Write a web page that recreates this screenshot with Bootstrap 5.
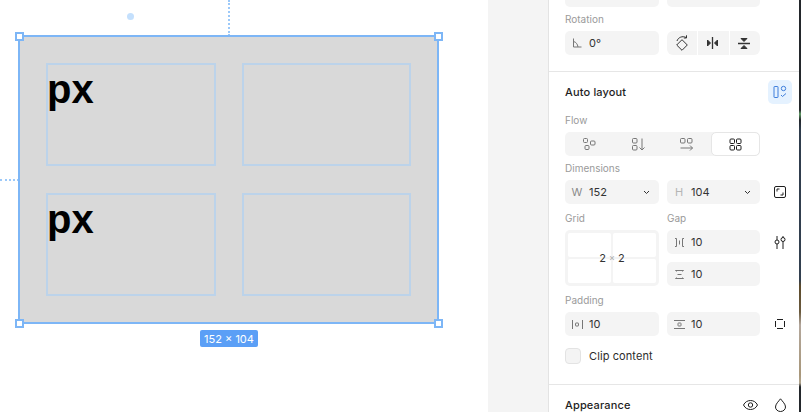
<!DOCTYPE html>
<html lang="en">
<head>
  <meta charset="UTF-8">
  <title>Auto layout</title>
  <link href="https://cdn.jsdelivr.net/npm/bootstrap@5.3.3/dist/css/bootstrap.min.css" rel="stylesheet">
  <style>
    html, body { height: 412px; overflow: hidden; background: #fff; }
    body { font-family: Inter, "Liberation Sans", sans-serif; font-size: 11px; color: #2c2c2c; }
    svg { display: block; flex: none; fill: none; stroke: currentColor; stroke-width: 1; }

    /* canvas */
    .board { position: relative; width: 488px; height: 412px; background: #fff; flex: none; }
    .guide-v { position: absolute; left: 228px; top: 0; height: 36px; border-left: 2px dotted #9cc9f9; }
    .guide-h { position: absolute; left: 0; top: 179px; width: 19px; border-top: 2px dotted #9cc9f9; }
    .pivot { position: absolute; left: 127px; top: 13px; width: 7px; height: 7px; border-radius: 50%; background: #c4e0fd; }
    .frame-box { position: absolute; left: 18px; top: 35px; width: 421px; height: 289px; background: #d9d9d9; border: 2px solid #7db6f6;
      display: grid; grid-template-columns: 170px 169px; grid-template-rows: 103px 103px; column-gap: 26px; row-gap: 27px; padding: 26px 26px 0 26px; }
    .cell-box { border: 2px solid #bcd3ea; }
    .px-text { font-family: "Liberation Sans", sans-serif; font-weight: 700; font-size: 40px; line-height: 46px; color: #000; margin: 1px 0 0 -1px; }
    .grip { position: absolute; width: 9px; height: 9px; background: #fff; border: 2px solid #7db6f6; }
    .size-tag { position: absolute; left: 200px; top: 330px; width: 58px; height: 17px; border-radius: 2px; background: #5b9ff6; color: #fff; font-size: 11px; line-height: 18px; text-align: center; }

    /* side strip + panel */
    .strip { width: 61px; height: 412px; background: #f4f4f4; border-right: 1px solid #e3e3e3; flex: none; }
    .panel { width: 250px; height: 412px; background: #fff; overflow: hidden; flex: none; }
    .edge { width: 2px; height: 412px; flex: none; background: linear-gradient(#23272b 0, #23272b 110px, #5f9a63 114px, #23272b 120px, #2f3c4c 130px, #33404f 280px, #5c4a2c 286px, #6a5a3e 312px, #b3a79c 325px, #a8977a 375px, #b0a58f 383px, #23272b 387px, #23272b 412px); }
    .sect { padding: 0 0 0 16px; border-bottom: 1px solid #e6e6e6; }
    .stub { height: 7px; overflow: hidden; }
    .stub > div { margin-top: -17px; }
    .lbl { height: 24px; line-height: 25px; font-size: 10px; color: #9a9a9a; }
    .fld { height: 24px; border-radius: 5px; background: #f4f4f4; display: flex; align-items: center; color: #333; }
    .w-a { width: 94px; }
    .w-b { width: 93px; }
    .side-ico { width: 24px; height: 24px; display: flex; align-items: center; justify-content: center; color: #1e1e1e; }
    .gap-8 { gap: 8px; }
    .ico-l { width: 24px; display: flex; justify-content: center; color: #777; flex: none; }
    .hd { font-size: 11px; font-weight: 500; color: #1e1e1e; letter-spacing: .15px; }
    .flip-btn { flex: 1; height: 24px; background: #f4f4f4; display: flex; align-items: center; justify-content: center; color: #333; padding-right: 1px; }
    .al-btn { width: 24px; height: 24px; border-radius: 5px; background: #e5f2ff; color: #3f7fdc; display: flex; align-items: center; justify-content: center; }
    .seg { width: 195px; height: 24px; border-radius: 5px; background: #f4f4f4; display: flex; }
    .seg-it { width: 25%; flex: none; display: flex; align-items: center; justify-content: center; color: #777; }
    .seg-on { background: #fff; border: 1px solid #e6e6e6; border-radius: 5px; color: #1e1e1e; }
    .dim-k { width: 24px; text-align: center; color: #8a8a8a; flex: none; }
    .chev { margin-left: auto; margin-right: 9px; color: #333; }
    .grid-pick { position: relative; width: 94px; height: 56px; border-radius: 5px; background: #f4f4f4; padding: 3px; display: grid; grid-template-columns: 1fr 1fr; grid-template-rows: 1fr 1fr; gap: 2px; }
    .grid-pick > span { background: #fff; border-radius: 2px; }
    .grid-val { position: absolute; inset: 0; display: flex; align-items: center; justify-content: center; gap: 3px; color: #333; }
    .grid-val i { font-style: normal; color: #aaa; font-size: 9px; }
    .clip-row { margin-top: 12px; gap: 8px; line-height: 16px; letter-spacing: .1px; }
    .tick { width: 16px; height: 16px; border: 1px solid #e3e3e3; border-radius: 4px; background: #f4f4f4; }
  </style>
</head>
<body>
<div class="d-flex">

  <!-- canvas -->
  <div class="board">
    <div class="guide-v"></div>
    <div class="guide-h"></div>
    <div class="pivot"></div>
    <div class="frame-box">
      <div class="cell-box"><div class="px-text">px</div></div>
      <div class="cell-box"></div>
      <div class="cell-box"><div class="px-text">px</div></div>
      <div class="cell-box"></div>
    </div>
    <div class="grip" style="left:15px;top:32px"></div>
    <div class="grip" style="left:434px;top:32px"></div>
    <div class="grip" style="left:15px;top:319px"></div>
    <div class="grip" style="left:434px;top:319px"></div>
    <div class="size-tag">152 × 104</div>
  </div>

  <div class="strip"></div>

  <!-- inspector -->
  <div class="panel">
    <div class="sect pb-3">
      <div class="stub"><div class="d-flex gap-8">
        <div class="fld w-a"></div><div class="fld w-b"></div>
      </div></div>
      <div class="lbl">Rotation</div>
      <div class="d-flex gap-8">
        <div class="fld w-a">
          <div class="ico-l"><svg width="10" height="10" viewBox="0 0 10 10"><path d="M1.5 .5v8.5h8M1.5 3.500c2.500 .5 4 2.500 4.500 5.500"/></svg></div>
          <span>0°</span>
        </div>
        <div class="d-flex w-b rounded-2 overflow-hidden" style="gap:1px">
          <div class="flip-btn"><svg width="12" height="16" viewBox="0 0 12 16" stroke-width="1.300"><path d="M6 4.700 11.300 10 6 15.300 .7 10ZM1 6C2 2.500 6.500 .5 10 2.500M10.500 .3v2.700H7.800"/></svg></div>
          <div class="flip-btn"><svg width="13" height="12" viewBox="0 0 13 12"><path d="M6.500 0v12" stroke-width="1.300"/><path d="M1.500 3 4.500 6 1.500 9ZM11.500 3 8.500 6 11.500 9Z" fill="currentColor"/></svg></div>
          <div class="flip-btn"><svg width="12" height="13" viewBox="0 0 12 13"><path d="M0 6.500h12" stroke-width="1.300"/><path d="M3 1.500 6 4.500 9 1.500ZM3 11.500 6 8.500 9 11.500Z" fill="currentColor"/></svg></div>
        </div>
      </div>
    </div>

    <div class="sect" style="padding-top:8px;padding-bottom:20px">
      <div class="d-flex align-items-center justify-content-between" style="padding-right:7px;margin-bottom:4px">
        <span class="hd">Auto layout</span>
        <div class="al-btn"><svg width="14" height="14" viewBox="0 0 14 14"><rect x="1" y="1.500" width="4" height="11" rx=".5"/><circle cx="10.500" cy="3.500" r="2.200"/><path d="M8 10l1.500 1.500L13 8.500"/></svg></div>
      </div>
      <div class="lbl">Flow</div>
      <div class="seg">
        <div class="seg-it"><svg width="13" height="12" viewBox="0 0 13 12"><rect x=".5" y=".5" width="4" height="4" rx="1"/><rect x="7.500" y="3" width="4.500" height="4" rx="1"/><rect x="2" y="7.500" width="4" height="4" rx="1"/></svg></div>
        <div class="seg-it"><svg width="13" height="13" viewBox="0 0 13 13"><rect x=".5" y=".5" width="4.500" height="4.500" rx="1"/><rect x=".5" y="7.500" width="4.500" height="4.500" rx="1"/><path d="M10 .5v11.500M7.500 9.500 10 12l2.500-2.500"/></svg></div>
        <div class="seg-it"><svg width="13" height="13" viewBox="0 0 13 13"><rect x=".5" y=".5" width="4.500" height="4.500" rx="1"/><rect x="7.500" y=".5" width="4.500" height="4.500" rx="1"/><path d="M.5 10H12.500M10 7.500l2.500 2.500L10 12.500"/></svg></div>
        <div class="seg-it seg-on"><svg width="13" height="13" viewBox="0 0 13 13" stroke-width="1.200"><rect x="1" y="1" width="4.500" height="4.500" rx="1"/><rect x="7.500" y="1" width="4.500" height="4.500" rx="1"/><rect x="1" y="7.500" width="4.500" height="4.500" rx="1"/><rect x="7.500" y="7.500" width="4.500" height="4.500" rx="1"/></svg></div>
      </div>
      <div class="lbl">Dimensions</div>
      <div class="d-flex gap-8">
        <div class="fld w-a"><span class="dim-k">W</span><span>152</span>
          <svg class="chev" width="7" height="5" viewBox="0 0 7 5" stroke-width="1.200"><path d="M1 1l2.500 2.500L6 1"/></svg></div>
        <div class="fld w-b"><span class="dim-k" style="color:#b5b5b5">H</span><span>104</span>
          <svg class="chev" width="7" height="5" viewBox="0 0 7 5" stroke-width="1.200"><path d="M1 1l2.500 2.500L6 1"/></svg></div>
        <div class="side-ico"><svg width="12" height="12" viewBox="0 0 12 12"><rect x=".5" y=".5" width="11" height="11" rx="1.500"/><path d="M3 5.500V3h2.500M9 6.500V9H6.500"/></svg></div>
      </div>

      <div class="d-flex gap-8" style="margin-top:2px">
        <div class="w-a lbl">Grid</div>
        <div class="w-b lbl">Gap</div>
      </div>
      <div class="d-flex gap-8">
        <div class="grid-pick">
          <span></span><span></span><span></span><span></span>
          <div class="grid-val">2 <i>×</i> 2</div>
        </div>
        <div class="d-flex flex-column w-b" style="gap:8px">
          <div class="fld"><div class="ico-l"><svg width="9" height="9" viewBox="0 0 9 9"><path d="M0 .5h1.500v8H0M9 .5H7.500v8H9M4.500 2.500v4"/></svg></div><span>10</span></div>
          <div class="fld"><div class="ico-l"><svg width="9" height="9" viewBox="0 0 9 9"><path d="M.5 .5h8M.5 8.500h8M2.500 4.500h4M.5 .5l1 1M8.500 .5l-1 1M.5 8.500l1-1M8.500 8.500l-1-1"/></svg></div><span>10</span></div>
        </div>
        <div class="side-ico"><svg width="12" height="13" viewBox="0 0 12 13"><path d="M3 0v4M3 8v5M9 0v1.500M9 5.500V13"/><circle cx="3" cy="6" r="2"/><circle cx="9" cy="3.500" r="2"/></svg></div>
      </div>

      <div class="lbl" style="margin-top:2px">Padding</div>
      <div class="d-flex gap-8">
        <div class="fld w-a"><div class="ico-l"><svg width="11" height="9" viewBox="0 0 11 9"><path d="M.5 0v9M10.500 0v9"/><rect x="3.500" y="3" width="3" height="3" rx=".5"/></svg></div><span>10</span></div>
        <div class="fld w-b"><div class="ico-l"><svg width="11" height="9" viewBox="0 0 11 9"><path d="M0 .5h11M0 8.500h11"/><rect x="4" y="3" width="3" height="3" rx=".5"/></svg></div><span>10</span></div>
        <div class="side-ico"><svg width="10" height="10" viewBox="0 0 10 10"><path d="M2 .5h6M2 9.500h6M.5 2v6M9.500 2v6"/></svg></div>
      </div>
      <div class="d-flex align-items-center clip-row">
        <div class="tick"></div>
        <span>Clip content</span>
      </div>
    </div>

    <div class="d-flex align-items-center" style="padding:8px 7px 0 16px;height:32px">
      <span class="hd me-auto">Appearance</span>
      <div class="side-ico"><svg width="15" height="10" viewBox="0 0 15 10"><path d="M.5 5C2 2 4.500 .5 7.500 .5S13 2 14.500 5C13 8 10.500 9.500 7.500 9.500S2 8 .5 5Z"/><circle cx="7.500" cy="5" r="2.200"/></svg></div>
      <div class="side-ico" style="margin-left:6px"><svg width="11" height="14" viewBox="0 0 11 14"><path d="M5.500 .8C7.500 3.500 10.500 6 10.500 9A5 4.500 0 0 1 .5 9C.5 6 3.500 3.500 5.500 .8Z"/></svg></div>
    </div>
  </div>

  <div class="edge"></div>
</div>
<script src="https://cdn.jsdelivr.net/npm/bootstrap@5.3.3/dist/js/bootstrap.bundle.min.js"></script>
</body>
</html>
